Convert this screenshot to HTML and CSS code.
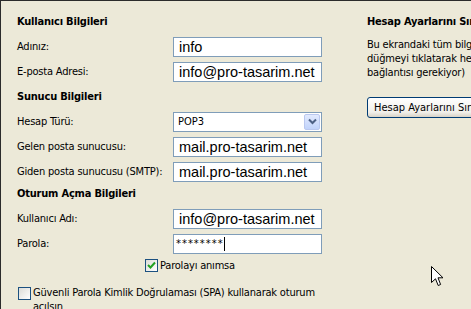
FILE: index.html
```html
<!DOCTYPE html>
<html>
<head lang="tr">
    <meta charset="utf-8">
    <title>Hesap Özellikleri</title>
    <link rel="stylesheet" href="styles.css">
</head>
<body>

<div class="frame">
    <div class="left">
        <div class="head">Kullanıcı Bilgileri</div>
        <div class="row"><span>Adınız:</span><div class="box">info</div></div>
        <div class="row"><span>E-posta Adresi:</span><div class="box">info@pro-tasarim.net</div></div>

        <div class="head">Sunucu Bilgileri</div>
        <div class="row">
            <span>Hesap Türü:</span>
            <div class="box combo">
                <span>POP3</span>
                <span class="drop">
                    <svg width="9" height="7" viewBox="0 0 9 7"><path d="M1 1.5 L4.5 5 L8 1.5" fill="none" stroke="#4d6185" stroke-width="2"/></svg>
                </span>
            </div>
        </div>
        <div class="row"><span>Gelen posta sunucusu:</span><div class="box">mail.pro-tasarim.net</div></div>
        <div class="row"><span>Giden posta sunucusu (SMTP):</span><div class="box">mail.pro-tasarim.net</div></div>

        <div class="head head-last">Oturum Açma Bilgileri</div>
        <div class="row"><span>Kullanıcı Adı:</span><div class="box">info@pro-tasarim.net</div></div>
        <div class="row"><span>Parola:</span><div class="box pass">********<i class="caret"></i></div></div>

        <div class="check remember">
            <span class="cb">
                <svg width="11" height="11" viewBox="0 0 11 11"><path d="M2 5 L4.5 7.5 L9 2.5" fill="none" stroke="#21a121" stroke-width="2"/></svg>
            </span>
            Parolayı anımsa
        </div>
        <div class="check spa">
            <span class="cb"></span>
            <span class="spa-text">Güvenli Parola Kimlik Doğrulaması (SPA) kullanarak oturum açılsın</span>
        </div>
    </div>

    <div class="right">
        <div class="head">Hesap Ayarlarını Sına</div>
        <p>
            Bu ekrandaki tüm bilgileri doldurduktan sonra, aşağıdaki<br>
            düğmeyi tıklatarak hesabınızı sınamanızı öneririz. (Ağ<br>
            bağlantısı gerekiyor)
        </p>
        <button class="btn">Hesap Ayarlarını Sına...</button>
    </div>

    <svg class="cursor" width="13" height="21" viewBox="0 0 13 21">
        <path d="M0.5 0.5 L0.5 16.5 L4.5 12.8 L7.2 19.5 L9.6 18.5 L7 11.8 L12 11.8 Z" fill="#fff" stroke="#000" stroke-width="1"/>
    </svg>
</div>

</body>
</html>
```

FILE: styles.css
```css
* { box-sizing: border-box; }

html, body {
    margin: 0;
    height: 309px;
    overflow: hidden;
}

body {
    background: #ece9d8;
    color: #000;
    font-size: 11px;
    font-family: 'DejaVu Sans Condensed', 'DejaVu Sans', sans-serif;
    letter-spacing: -0.2px;
    border-top: 1px solid #2b2b2b;
    border-left: 1px solid #2b2b2b;
}

.frame {
    display: flex;
    position: relative;
    height: 100%;
}

.left {
    width: 366px;
    flex-shrink: 0;
    padding: 8px 0 0 16px;
}

.right {
    flex: 1;
    min-width: 0;
    padding-top: 8px;
    white-space: nowrap;
    overflow: hidden;
}

.head {
    height: 25px;
    display: flex;
    align-items: center;
    font-weight: bold;
}

.head-last {
    height: 22px;
    align-items: flex-start;
    padding-top: 3px;
}

.row {
    display: grid;
    grid-template-columns: 156px 149px;
    align-items: center;
    height: 25px;
}

.box {
    height: 20px;
    border: 1px solid #7f9db9;
    background: #fff;
    padding-left: 5px;
    font-family: 'Liberation Sans', Arial, sans-serif;
    font-size: 14.5px;
    letter-spacing: 0;
    line-height: 18px;
    white-space: nowrap;
    overflow: hidden;
}

.combo {
    display: flex;
    align-items: center;
    justify-content: space-between;
    padding: 0 1px 0 4px;
    font-family: 'DejaVu Sans Condensed', 'DejaVu Sans', sans-serif;
    font-size: 11px;
}

.drop {
    width: 16px;
    height: 16px;
    display: flex;
    align-items: center;
    justify-content: center;
    border: 1px solid #bac8ef;
    border-radius: 2px;
    background: linear-gradient(#e2eafe, #c1d3fb);
}

.pass {
    display: flex;
    align-items: center;
    font-family: 'DejaVu Sans Condensed', 'DejaVu Sans', sans-serif;
    font-size: 11px;
    padding-left: 2px;
    letter-spacing: 1px;
}

.caret {
    display: inline-block;
    width: 1px;
    height: 14px;
    background: #000;
}

.check {
    display: flex;
    align-items: center;
    gap: 2px;
}

.remember {
    height: 22px;
    margin: -2px 0 0 128px;
}

.spa {
    align-items: flex-start;
    margin: 11px 0 0 1px;
}

.spa-text {
    width: 300px;
    line-height: 14px;
    margin-top: -1px;
}

.cb {
    width: 13px;
    height: 13px;
    flex-shrink: 0;
    display: flex;
    align-items: center;
    justify-content: center;
    border: 1px solid #1c5180;
    background: linear-gradient(135deg, #dcdcd7, #fff);
}

p {
    margin: 4px 0 0;
    line-height: 14px;
}

.btn {
    margin-top: 17px;
    height: 21px;
    padding: 0 6px;
    border: 1px solid #003c74;
    border-radius: 3px;
    background: linear-gradient(#fff, #f0efea 75%, #d8d2c6);
    font: inherit;
    color: #000;
    white-space: nowrap;
}

.cursor {
    position: absolute;
    left: 430px;
    top: 265px;
}
```
